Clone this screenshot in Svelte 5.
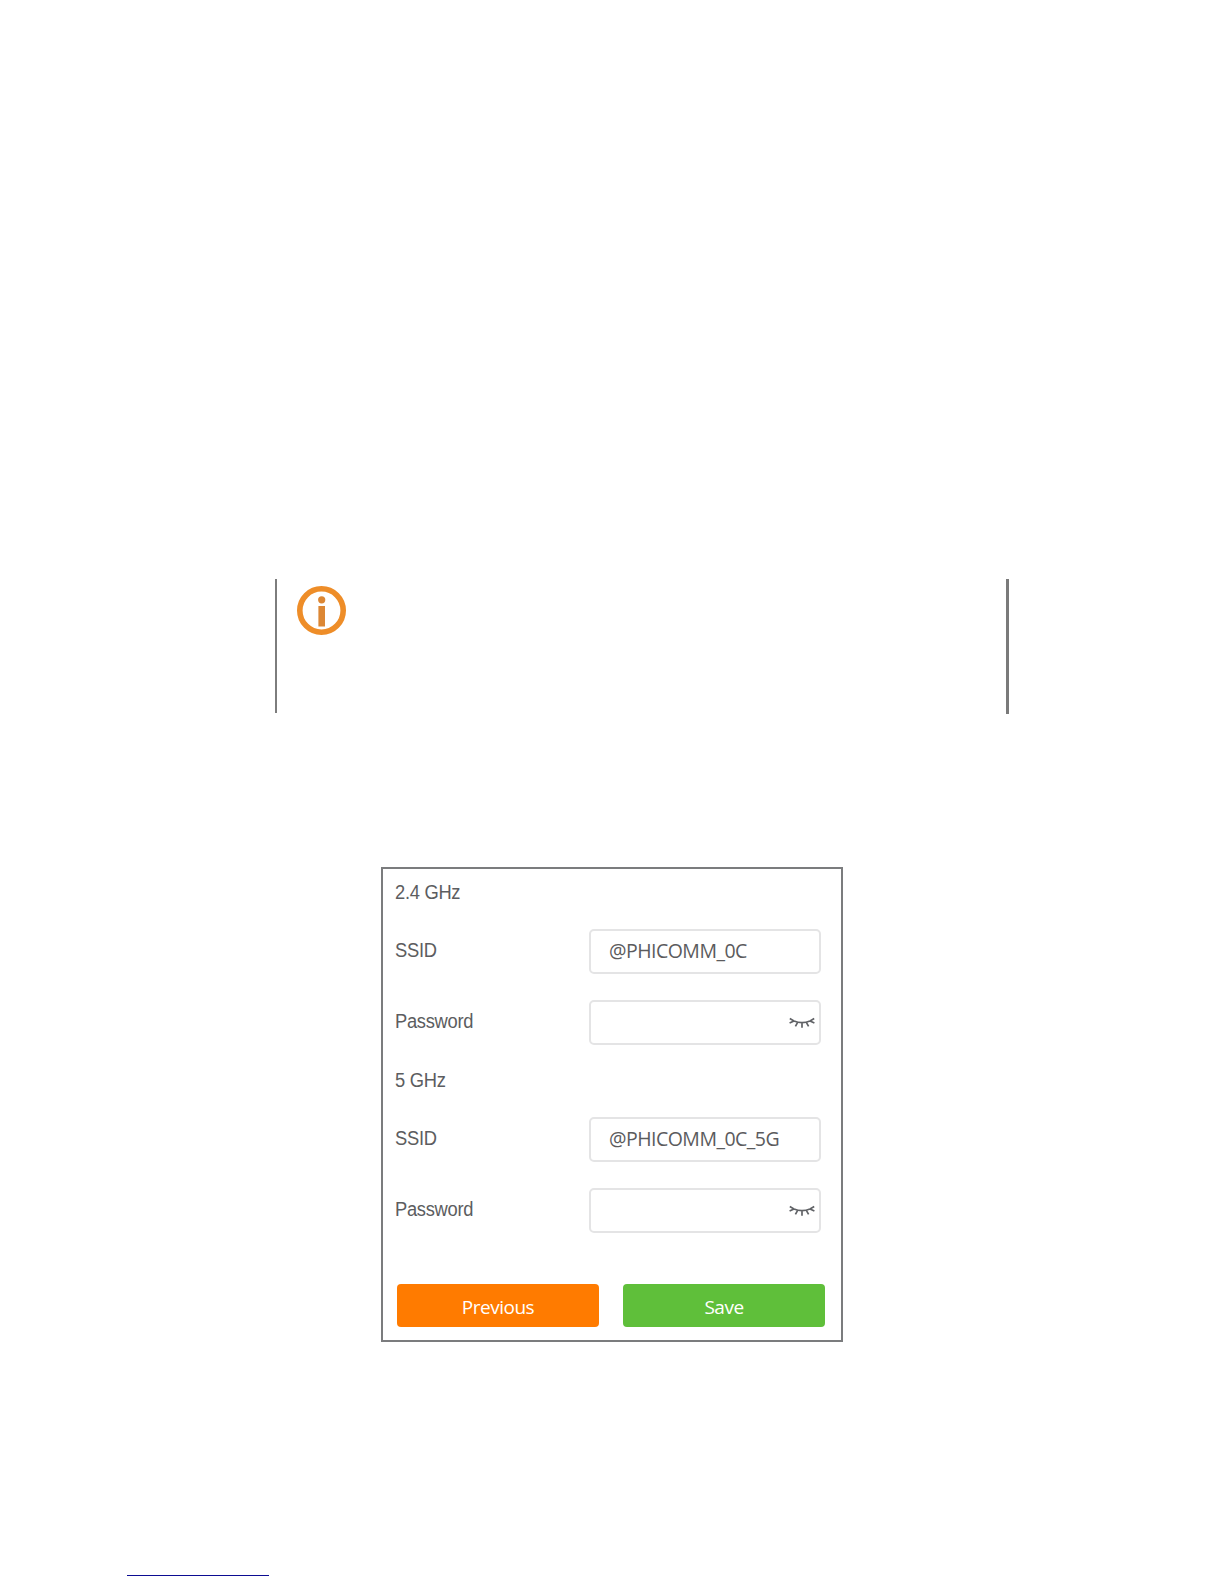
<script lang="ts">
  let bands = $state([
    { name: "2.4 GHz", ssid: "@PHICOMM_0C", password: "" },
    { name: "5 GHz", ssid: "@PHICOMM_0C_5G", password: "" }
  ]);
</script>

<main class="page">
  <aside class="note">
    <svg class="info" viewBox="0 0 49 49" aria-hidden="true">
      <circle cx="24.5" cy="24.5" r="21.7" fill="none" stroke="#ee8d28" stroke-width="5.6" />
      <circle cx="24.7" cy="13.8" r="3.6" fill="#dc8734" />
      <rect x="21.4" y="20" width="6.6" height="20.5" fill="#dc8734" />
    </svg>
    <span class="note-edge"></span>
  </aside>

  <form class="panel">
    {#each bands as band}
      <section class="band">
        <h2>{band.name}</h2>
        <label class="row">
          <span class="label">SSID</span>
          <span class="field"><input type="text" bind:value={band.ssid} /></span>
        </label>
        <label class="row">
          <span class="label">Password</span>
          <span class="field">
            <input type="password" bind:value={band.password} />
            <svg class="eye" viewBox="0 0 26 12" aria-hidden="true">
              <path d="M.8 1.6 L5 4 Q13 7.4 21 4 L25.2 1.6 M.6 6 L5 4 M25.4 6 L21 4 M8.4 5.8 L6.4 9.4 M13 6 V10.8 M17.6 5.8 L19.6 9.4" />
            </svg>
          </span>
        </label>
      </section>
    {/each}

    <div class="actions">
      <button class="previous" type="button">Previous</button>
      <button class="save" type="button">Save</button>
    </div>
  </form>

  <div class="footer-link"></div>
</main>

<style>
  :global(body) {
    margin: 0;
    background: #fff;
  }

  .page {
    box-sizing: border-box;
    display: flex;
    flex-direction: column;
    width: 1224px;
    height: 1584px;
    padding-top: 579px;
    overflow: hidden;
    color: #5c5d60;
    font-family: "Liberation Sans", Arial, sans-serif;
  }

  .note {
    display: flex;
    justify-content: space-between;
    box-sizing: border-box;
    width: 734px;
    height: 135px;
    margin-left: 275px;
    background: linear-gradient(#7d7d7d, #7d7d7d) no-repeat 0 0 / 2px 134px;
  }

  .info {
    width: 49px;
    height: 49px;
    margin: 7px 0 0 22px;
  }

  .note-edge {
    width: 3px;
    background: #7a7a7a;
  }

  .panel {
    box-sizing: border-box;
    width: 462px;
    height: 475px;
    margin: 153px 0 0 381px;
    padding: 0 16px 0 12px;
    border: 2px solid #7b7c7e;
  }

  .band {
    height: 188px;
  }

  h2,
  .label {
    font-size: 19.4px;
    font-weight: 400;
    letter-spacing: -0.3px;
    transform: scaleX(0.945);
    transform-origin: left;
  }

  h2 {
    height: 48px;
    margin: 0 0 12px;
    line-height: 46px;
  }

  .row {
    display: grid;
    grid-template-columns: 194px 232px;
    height: 45px;
    margin-bottom: 26px;
    line-height: 43px;
  }

  .field {
    display: flex;
    align-items: center;
    box-sizing: border-box;
    height: 45px;
    padding: 0 4px 0 18px;
    border: 2px solid #e4e4e5;
    border-radius: 5px;
  }

  input {
    flex: 1;
    min-width: 0;
    padding: 0 0 2px;
    border: 0;
    outline: 0;
    background: none;
    color: #5b5b5d;
    font: 19.5px "Open Sans", "Segoe UI", sans-serif;
    letter-spacing: -0.52px;
  }

  .eye {
    width: 26px;
    height: 12px;
    fill: none;
    stroke: #606266;
    stroke-width: 1.7;
  }

  .actions {
    display: flex;
    gap: 24px;
    margin: 39px 0 0 2px;
  }

  button {
    width: 202px;
    height: 43px;
    padding: 2px 0 0;
    border: 0;
    border-radius: 4px;
    color: #fff;
    font: 19px "Open Sans", "Segoe UI", sans-serif;
    letter-spacing: -0.5px;
  }

  .previous {
    background: #ff7b00;
  }

  .save {
    background: #5fbf3a;
  }

  .footer-link {
    width: 142px;
    height: 1px;
    margin: 233px 0 0 127px;
    background: #0c0c92;
  }
</style>
